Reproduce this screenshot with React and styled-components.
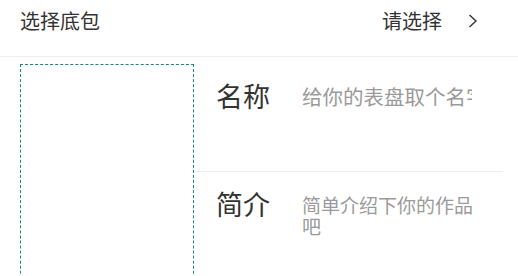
import React from "react";
import styled, { createGlobalStyle } from "styled-components";

const GlobalStyle = createGlobalStyle`
  html, body {
    margin: 0;
    padding: 0;
    background: #fff;
    font-family: "Noto Sans CJK SC", "Noto Sans", sans-serif;
    color: #333;
    overflow: hidden;
  }
`;

const Page = styled.div`
  width: 518px;
  height: 276px;
  overflow: hidden;
  background: #fff;
`;

const Header = styled.div`
  height: 57px;
  box-sizing: border-box;
  padding: 9px 40px 0 20px;
  display: flex;
  justify-content: space-between;
  align-items: flex-start;
  border-bottom: 1px solid #eeeeee;
`;

const Title = styled.span`
  font-size: 20px;
  line-height: 24px;
  color: #333;
`;

const Picker = styled.div`
  display: flex;
  align-items: center;
  gap: 26px;
  font-size: 20px;
  line-height: 24px;
  color: #333;
`;

const Body = styled.div`
  display: flex;
  padding: 7px 15px 0 20px;
`;

const Drop = styled.div`
  width: 174px;
  height: 240px;
  box-sizing: border-box;
  border: 1px dashed #16897b;
  flex-shrink: 0;
`;

const Fields = styled.div`
  flex: 1;
  display: flex;
  flex-direction: column;
`;

const Row = styled.div`
  display: flex;
  align-items: flex-start;
  height: ${(p) => p.h}px;
  box-sizing: border-box;
  padding: 16px 0 0 22px;
  border-bottom: ${(p) => (p.line ? "1px solid #eeeeee" : "none")};
`;

const Label = styled.span`
  width: 86px;
  flex-shrink: 0;
  font-size: 27px;
  line-height: 32px;
  color: #333;
`;

const NameInput = styled.input`
  width: 170px;
  height: 32px;
  border: 0;
  outline: none;
  padding: 0;
  margin: 0;
  font-family: inherit;
  font-size: 20.5px;
  line-height: 32px;
  color: #333;
  background: transparent;
  &::placeholder {
    color: #9a9a9a;
  }
`;

const Intro = styled.textarea`
  width: 178px;
  height: 60px;
  margin: 6px 0 0;
  padding: 0;
  border: 0;
  outline: none;
  resize: none;
  overflow: hidden;
  font-family: inherit;
  font-size: 19px;
  line-height: 21px;
  color: #333;
  background: transparent;
  &::placeholder {
    color: #9a9a9a;
  }
`;

const Chevron = () => (
  <svg width="10" height="14" viewBox="0 0 10 14">
    <path d="M1.5 1 L8 7 L1.5 13" fill="none" stroke="#333" strokeWidth="1.4" />
  </svg>
);

export default function App() {
  return (
    <Page>
      <GlobalStyle />
      <Header>
        <Title>选择底包</Title>
        <Picker>
          <span>请选择</span>
          <Chevron />
        </Picker>
      </Header>
      <Body>
        <Drop />
        <Fields>
          <Row h={108} line>
            <Label>名称</Label>
            <NameInput placeholder="给你的表盘取个名字" />
          </Row>
          <Row h={110}>
            <Label>简介</Label>
            <Intro placeholder="简单介绍下你的作品吧" />
          </Row>
        </Fields>
      </Body>
    </Page>
  );
}
